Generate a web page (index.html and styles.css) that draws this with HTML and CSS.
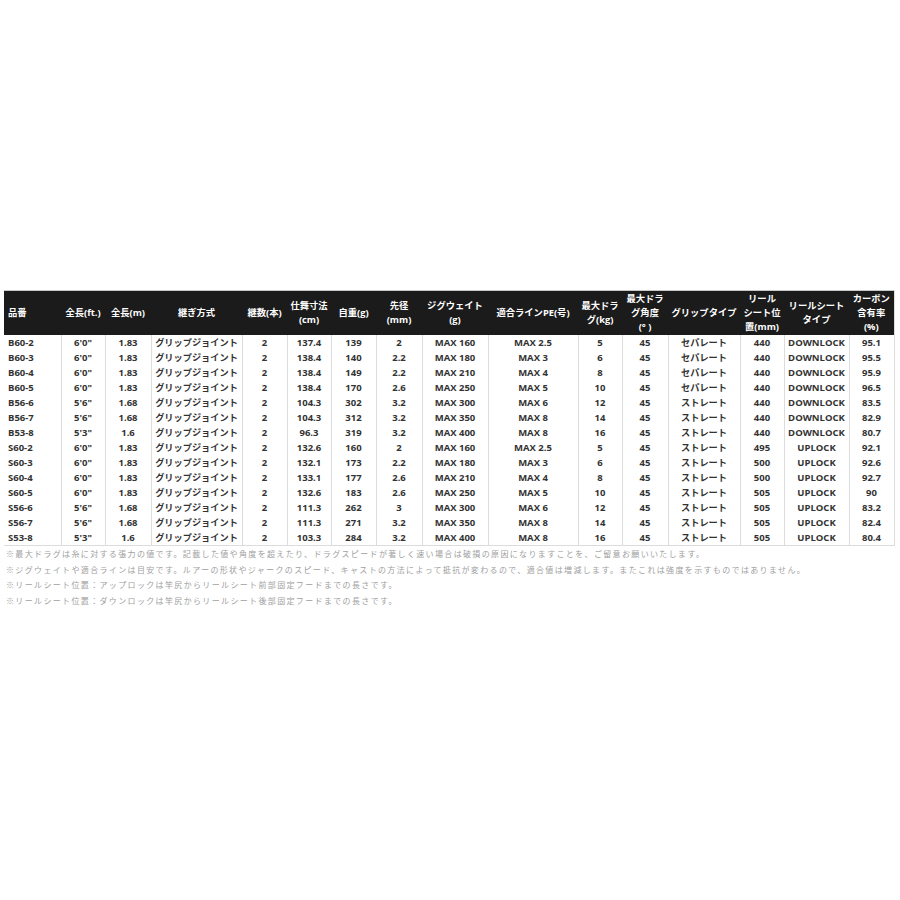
FILE: index.html
```html
<!DOCTYPE html>
<html lang="ja">
<head>
<meta charset="utf-8">
<title>スペック表</title>
<link rel="stylesheet" href="styles.css">
</head>
<body>
<div class="page">
  <table class="spec">
    <colgroup>
      <col class="c57"><col class="c44"><col class="c46"><col class="c91"><col class="c45"><col class="c44"><col class="c45"><col class="c46"><col class="c66"><col class="c90"><col class="c44"><col class="c46"><col class="c72"><col class="c44"><col class="c65"><col class="c45">
    </colgroup>
    <thead>
      <tr>
        <th class="left">品番</th>
        <th>全長(ft.)</th>
        <th>全長(m)</th>
        <th>継ぎ方式</th>
        <th>継数(本)</th>
        <th>仕舞寸法<br>(cm)</th>
        <th>自重(g)</th>
        <th>先径<br>(mm)</th>
        <th>ジグウェイト<br>(g)</th>
        <th>適合ラインPE(号)</th>
        <th>最大ドラ<br>グ(kg)</th>
        <th>最大ドラ<br>グ角度<br>(° )</th>
        <th>グリップタイプ</th>
        <th>リール<br>シート位<br>置(mm)</th>
        <th>リールシート<br>タイプ</th>
        <th>カーボン<br>含有率<br>(%)</th>
      </tr>
    </thead>
    <tbody>
      <tr><td class="left">B60-2</td><td>6'0"</td><td>1.83</td><td class="jp">グリップジョイント</td><td>2</td><td>137.4</td><td>139</td><td>2</td><td>MAX 160</td><td>MAX 2.5</td><td>5</td><td>45</td><td class="jp">セパレート</td><td>440</td><td>DOWNLOCK</td><td>95.1</td></tr>
      <tr><td class="left">B60-3</td><td>6'0"</td><td>1.83</td><td class="jp">グリップジョイント</td><td>2</td><td>138.4</td><td>140</td><td>2.2</td><td>MAX 180</td><td>MAX 3</td><td>6</td><td>45</td><td class="jp">セパレート</td><td>440</td><td>DOWNLOCK</td><td>95.5</td></tr>
      <tr><td class="left">B60-4</td><td>6'0"</td><td>1.83</td><td class="jp">グリップジョイント</td><td>2</td><td>138.4</td><td>149</td><td>2.2</td><td>MAX 210</td><td>MAX 4</td><td>8</td><td>45</td><td class="jp">セパレート</td><td>440</td><td>DOWNLOCK</td><td>95.9</td></tr>
      <tr><td class="left">B60-5</td><td>6'0"</td><td>1.83</td><td class="jp">グリップジョイント</td><td>2</td><td>138.4</td><td>170</td><td>2.6</td><td>MAX 250</td><td>MAX 5</td><td>10</td><td>45</td><td class="jp">セパレート</td><td>440</td><td>DOWNLOCK</td><td>96.5</td></tr>
      <tr><td class="left">B56-6</td><td>5'6"</td><td>1.68</td><td class="jp">グリップジョイント</td><td>2</td><td>104.3</td><td>302</td><td>3.2</td><td>MAX 300</td><td>MAX 6</td><td>12</td><td>45</td><td class="jp">ストレート</td><td>440</td><td>DOWNLOCK</td><td>83.5</td></tr>
      <tr><td class="left">B56-7</td><td>5'6"</td><td>1.68</td><td class="jp">グリップジョイント</td><td>2</td><td>104.3</td><td>312</td><td>3.2</td><td>MAX 350</td><td>MAX 8</td><td>14</td><td>45</td><td class="jp">ストレート</td><td>440</td><td>DOWNLOCK</td><td>82.9</td></tr>
      <tr><td class="left">B53-8</td><td>5'3"</td><td>1.6</td><td class="jp">グリップジョイント</td><td>2</td><td>96.3</td><td>319</td><td>3.2</td><td>MAX 400</td><td>MAX 8</td><td>16</td><td>45</td><td class="jp">ストレート</td><td>440</td><td>DOWNLOCK</td><td>80.7</td></tr>
      <tr><td class="left">S60-2</td><td>6'0"</td><td>1.83</td><td class="jp">グリップジョイント</td><td>2</td><td>132.6</td><td>160</td><td>2</td><td>MAX 160</td><td>MAX 2.5</td><td>5</td><td>45</td><td class="jp">ストレート</td><td>495</td><td>UPLOCK</td><td>92.1</td></tr>
      <tr><td class="left">S60-3</td><td>6'0"</td><td>1.83</td><td class="jp">グリップジョイント</td><td>2</td><td>132.1</td><td>173</td><td>2.2</td><td>MAX 180</td><td>MAX 3</td><td>6</td><td>45</td><td class="jp">ストレート</td><td>500</td><td>UPLOCK</td><td>92.6</td></tr>
      <tr><td class="left">S60-4</td><td>6'0"</td><td>1.83</td><td class="jp">グリップジョイント</td><td>2</td><td>133.1</td><td>177</td><td>2.6</td><td>MAX 210</td><td>MAX 4</td><td>8</td><td>45</td><td class="jp">ストレート</td><td>500</td><td>UPLOCK</td><td>92.7</td></tr>
      <tr><td class="left">S60-5</td><td>6'0"</td><td>1.83</td><td class="jp">グリップジョイント</td><td>2</td><td>132.6</td><td>183</td><td>2.6</td><td>MAX 250</td><td>MAX 5</td><td>10</td><td>45</td><td class="jp">ストレート</td><td>505</td><td>UPLOCK</td><td>90</td></tr>
      <tr><td class="left">S56-6</td><td>5'6"</td><td>1.68</td><td class="jp">グリップジョイント</td><td>2</td><td>111.3</td><td>262</td><td>3</td><td>MAX 300</td><td>MAX 6</td><td>12</td><td>45</td><td class="jp">ストレート</td><td>505</td><td>UPLOCK</td><td>83.2</td></tr>
      <tr><td class="left">S56-7</td><td>5'6"</td><td>1.68</td><td class="jp">グリップジョイント</td><td>2</td><td>111.3</td><td>271</td><td>3.2</td><td>MAX 350</td><td>MAX 8</td><td>14</td><td>45</td><td class="jp">ストレート</td><td>505</td><td>UPLOCK</td><td>82.4</td></tr>
      <tr><td class="left">S53-8</td><td>5'3"</td><td>1.6</td><td class="jp">グリップジョイント</td><td>2</td><td>103.3</td><td>284</td><td>3.2</td><td>MAX 400</td><td>MAX 8</td><td>16</td><td>45</td><td class="jp">ストレート</td><td>505</td><td>UPLOCK</td><td>80.4</td></tr>
    </tbody>
  </table>
  <div class="notes">
    <p>※最大ドラグは糸に対する張力の値です。記載した値や角度を超えたり、ドラグスピードが著しく速い場合は破損の原因になりますことを、ご留意お願いいたします。</p>
    <p>※ジグウェイトや適合ラインは目安です。ルアーの形状やジャークのスピード、キャストの方法によって抵抗が変わるので、適合値は増減します。またこれは強度を示すものではありません。</p>
    <p>※リールシート位置：アップロックは竿尻からリールシート前部固定フードまでの長さです。</p>
    <p>※リールシート位置：ダウンロックは竿尻からリールシート後部固定フードまでの長さです。</p>
  </div>
</div>
</body>
</html>
```
FILE: styles.css
```css
html, body {
  margin: 0;
  padding: 0;
  background: #ffffff;
}
.page {
  padding: 290px 5px 0 4px;
  font-family: "Open Sans", "Noto Sans CJK JP", sans-serif;
}
.spec {
  width: 890px;
  table-layout: fixed;
  border-collapse: collapse;
  border-top: 1px solid #c8c8c8;
  border-bottom: 1px solid #dcdcdc;
  border-right: 1px solid #dcdcdc;
}
.c57 { width: 57px; }
.c44 { width: 44px; }
.c45 { width: 45px; }
.c46 { width: 46px; }
.c65 { width: 65px; }
.c66 { width: 66px; }
.c72 { width: 72px; }
.c90 { width: 90px; }
.c91 { width: 91px; }
.spec th {
  background: #1b1b1b;
  color: #ffffff;
  font-family: "Open Sans", "Noto Sans CJK JP", sans-serif;
  font-weight: 700;
  font-size: 9.3px;
  line-height: 14px;
  height: 44px;
  padding: 0;
  text-align: center;
  vertical-align: middle;
  white-space: nowrap;
}
.spec td {
  color: #333333;
  font-weight: 700;
  font-size: 9.5px;
  line-height: 15px;
  height: 15px;
  padding: 0;
  text-align: center;
  vertical-align: middle;
  white-space: nowrap;
  border-left: 1px solid #dcdcdc;
}
.spec td.jp {
  font-size: 9.2px;
}
.spec th.left,
.spec td.left {
  text-align: left;
  padding-left: 4px;
  border-left: none;
}
.notes {
  padding: 0 0 0 2px;
}
.notes p {
  margin: 0;
  font-family: "Noto Sans CJK JP", sans-serif;
  font-size: 8px;
  letter-spacing: 1.35px;
  line-height: 15.5px;
  color: #a0a0a0;
  white-space: nowrap;
}
```
